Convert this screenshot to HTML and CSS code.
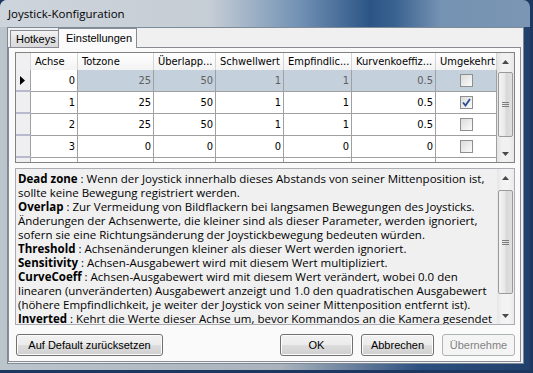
FILE: index.html
```html
<!DOCTYPE html>
<html lang="de">
<head>
  <meta charset="UTF-8">
  <title>Joystick-Konfiguration</title>
  <link rel="stylesheet" href="styles.css">
</head>
<body>
  <div class="window">
    <div class="titlebar">Joystick-Konfiguration</div>
    <div class="client">
      <div class="tabs">
        <div class="tab">Hotkeys</div>
        <div class="tab active">Einstellungen</div>
      </div>
      <div class="page">
        <div class="grid">
          <div class="cells">
            <div class="hd corner"></div>
            <div class="hd">Achse</div>
            <div class="hd">Totzone</div>
            <div class="hd">Überlapp...</div>
            <div class="hd">Schwellwert</div>
            <div class="hd">Empfindlic...</div>
            <div class="hd">Kurvenkoeffiz...</div>
            <div class="hd">Umgekehrt</div>

            <div class="rh"><svg width="5" height="9" viewBox="0 0 5 9"><polygon points="0,0 5,4.5 0,9" fill="#000"/></svg></div>
            <div class="c">0</div>
            <div class="c sel">25</div>
            <div class="c sel">50</div>
            <div class="c sel">1</div>
            <div class="c sel">1</div>
            <div class="c sel">0.5</div>
            <div class="c sel chk"><span class="box"></span></div>

            <div class="rh"></div>
            <div class="c">1</div>
            <div class="c">25</div>
            <div class="c">50</div>
            <div class="c">1</div>
            <div class="c">1</div>
            <div class="c">0.5</div>
            <div class="c chk"><span class="box checked"><svg width="9" height="9" viewBox="0 0 9 9"><path d="M1 4.5 L3.5 7.5 L8 1" fill="none" stroke="#2b4c95" stroke-width="1.8"/></svg></span></div>

            <div class="rh"></div>
            <div class="c">2</div>
            <div class="c">25</div>
            <div class="c">50</div>
            <div class="c">1</div>
            <div class="c">1</div>
            <div class="c">0.5</div>
            <div class="c chk"><span class="box"></span></div>

            <div class="rh"></div>
            <div class="c">3</div>
            <div class="c">0</div>
            <div class="c">0</div>
            <div class="c">0</div>
            <div class="c">0</div>
            <div class="c">0</div>
            <div class="c chk"><span class="box"></span></div>

            <div class="rh"></div>
            <div class="c"></div>
            <div class="c"></div>
            <div class="c"></div>
            <div class="c"></div>
            <div class="c"></div>
            <div class="c"></div>
            <div class="c chk"><span class="box"></span></div>
          </div>
          <div class="vscroll">
            <div class="sb-btn"><svg width="7" height="4" viewBox="0 0 7 4"><polygon points="0,4 3.5,0 7,4" fill="#4a4a4a"/></svg></div>
            <div class="sb-track"><div class="sb-thumb"><span class="grip"></span></div></div>
            <div class="sb-btn"><svg width="7" height="4" viewBox="0 0 7 4"><polygon points="0,0 3.5,4 7,0" fill="#4a4a4a"/></svg></div>
          </div>
        </div>

        <div class="info">
          <div class="info-text">
            <b>Dead zone</b> : Wenn der Joystick innerhalb dieses Abstands von seiner Mittenposition ist,<br>
            sollte keine Bewegung registriert werden.<br>
            <b>Overlap</b> : Zur Vermeidung von Bildflackern bei langsamen Bewegungen des Joysticks.<br>
            Änderungen der Achsenwerte, die kleiner sind als dieser Parameter, werden ignoriert,<br>
            sofern sie eine Richtungsänderung der Joystickbewegung bedeuten würden.<br>
            <b>Threshold</b> : Achsenänderungen kleiner als dieser Wert werden ignoriert.<br>
            <b>Sensitivity</b> : Achsen-Ausgabewert wird mit diesem Wert multipliziert.<br>
            <b>CurveCoeff</b> : Achsen-Ausgabewert wird mit diesem Wert verändert, wobei 0.0 den<br>
            linearen (unveränderten) Ausgabewert anzeigt und 1.0 den quadratischen Ausgabewert<br>
            (höhere Empfindlichkeit, je weiter der Joystick von seiner Mittenposition entfernt ist).<br>
            <b>Inverted</b> : Kehrt die Werte dieser Achse um, bevor Kommandos an die Kamera gesendet
          </div>
          <div class="vscroll">
            <div class="sb-btn"><svg width="7" height="4" viewBox="0 0 7 4"><polygon points="0,4 3.5,0 7,4" fill="#4a4a4a"/></svg></div>
            <div class="sb-track"><div class="sb-thumb"><span class="grip"></span></div></div>
            <div class="sb-btn"><svg width="7" height="4" viewBox="0 0 7 4"><polygon points="0,0 3.5,4 7,0" fill="#4a4a4a"/></svg></div>
          </div>
        </div>

        <div class="buttons">
          <button class="btn wide">Auf Default zurücksetzen</button>
          <span class="spacer"></span>
          <button class="btn">OK</button>
          <button class="btn">Abbrechen</button>
          <button class="btn" disabled>Übernehme</button>
        </div>
      </div>
    </div>
  </div>
</body>
</html>
```

FILE: styles.css
```css
body {
  margin: 0;
  background-color: #1c3760;
  font-family: "Liberation Sans", Arial, sans-serif;
}

.window {
  width: 530px;
  height: 370px;
  box-sizing: border-box;
  padding: 0 6px 6px 7px;
  border-radius: 7px 7px 0 0;
  overflow: hidden;
  display: flex;
  flex-direction: column;
  background: linear-gradient(to right, #bcc4cc 0, #aab3bd 280px, #2d5080 420px, #21406c 100%);
}

.titlebar {
  height: 27px;
  margin: 0 -6px 0 -7px;
  padding-left: 8px;
  flex: none;
  font-family: "Open Sans", sans-serif;
  font-size: 11.5px;
  line-height: 27px;
  color: #000;
  background: linear-gradient(to right, #ced4db 0, #c5cdd5 210px, #7191b4 300px, #2c5586 370px, #3a6290 395px, #7492b2 440px, #7b96b4 100%);
}

.client {
  flex: 1;
  display: flex;
  flex-direction: column;
  border: 1px solid #7d8b99;
  background-color: #f0f0f0;
  padding: 0 2px 1px 0;
}

.tabs {
  height: 19px;
  flex: none;
  display: flex;
  align-items: flex-end;
  padding-left: 2px;
  font-size: 11px;
}

.tab {
  height: 17px;
  width: 49px;
  box-sizing: border-box;
  border: 1px solid #898c95;
  border-bottom: none;
  padding-left: 5px;
  line-height: 16px;
  background: linear-gradient(#f3f3f3, #e3e3e3 50%, #d9d9d9);
}

.tab.active {
  height: 20px;
  width: 79px;
  margin-left: -1px;
  margin-bottom: -1px;
  padding-left: 7px;
  line-height: 19px;
  background: #fafafa;
  position: relative;
}

.page {
  flex: 1;
  display: flex;
  flex-direction: column;
  border: 1px solid #898c95;
  background-color: #fafafa;
  padding: 4px 5px 5px 6px;
}

/* grid */

.grid {
  height: 111px;
  flex: none;
  box-sizing: border-box;
  border: 1px solid #828282;
  display: flex;
  overflow: hidden;
  background-color: #fff;
}

.cells {
  width: 481px;
  display: grid;
  grid-template-columns: 15px 47px 76px 62px 68px 68px 84px 61px;
  grid-template-rows: 17px repeat(5, 22px);
  font-family: "DejaVu Sans Condensed", "DejaVu Sans", sans-serif;
  font-size: 11px;
}

.hd {
  box-sizing: border-box;
  border-right: 1px solid #d5d5d5;
  padding-left: 4px;
  line-height: 17px;
  white-space: nowrap;
  overflow: hidden;
  background: linear-gradient(#ffffff, #f3f3f3);
}

.hd.corner {
  padding: 0;
  background: #f0f0f2;
}

.rh {
  box-sizing: border-box;
  border-right: 1px solid #a0a0a0;
  border-bottom: 2px solid #b8b8cf;
  background: #efeff2;
  display: flex;
  align-items: center;
  padding-left: 4px;
}

.c {
  box-sizing: border-box;
  border-right: 1px solid #a0a0a0;
  border-bottom: 1px solid #a0a0a0;
  text-align: right;
  padding-right: 2px;
  line-height: 21px;
  color: #000;
}

.c.sel {
  background-color: #c4d0dc;
  color: #5e5e5e;
}

.c.chk {
  display: flex;
  justify-content: center;
  align-items: center;
  padding: 0;
}

.box {
  width: 13px;
  height: 13px;
  box-sizing: border-box;
  border: 1px solid #8e8f8f;
  background: linear-gradient(135deg, #dcdcdc, #fbfbfb);
  display: flex;
  align-items: center;
  justify-content: center;
}

/* scrollbars */

.vscroll {
  width: 17px;
  flex: none;
  display: flex;
  flex-direction: column;
  background: linear-gradient(to right, #e3e3e3, #f1f1f1 30%, #f1f1f1 70%, #e8e8e8);
}

.sb-btn {
  height: 17px;
  flex: none;
  display: flex;
  align-items: center;
  justify-content: center;
}

.sb-track {
  flex: 1;
}

.sb-thumb {
  margin: 2px 0 0 1px;
  width: 15px;
  height: 65px;
  box-sizing: border-box;
  border: 1px solid #9a9a9a;
  border-radius: 2px;
  background: linear-gradient(to right, #f4f4f4, #e8e8e8 45%, #d8d8d8 55%, #e0e0e0);
  display: flex;
  align-items: center;
  justify-content: center;
}

.grip {
  width: 7px;
  height: 5px;
  background: repeating-linear-gradient(#7d7d7d 0, #7d7d7d 1px, transparent 1px, transparent 2px);
}

/* info box */

.info {
  height: 157px;
  flex: none;
  margin-top: 5px;
  box-sizing: border-box;
  border: 1px solid #abadb3;
  background-color: #f0f0f0;
  display: flex;
  overflow: hidden;
}

.info-text {
  flex: 1;
  padding: 3px 0 0 2px;
  font-family: "Open Sans", sans-serif;
  font-size: 11.5px;
  line-height: 14px;
  white-space: nowrap;
  overflow: hidden;
  color: #000;
}

.info .vscroll {
  background: linear-gradient(to right, #e6e6e6, #f3f3f3 30%, #f3f3f3 70%, #ebebeb);
}

.info .sb-thumb {
  margin-top: 4px;
  height: 104px;
}

/* buttons */

.buttons {
  margin-top: 9px;
  display: flex;
  gap: 8px;
}

.spacer {
  flex: 1;
}

.btn {
  width: 73px;
  height: 22px;
  font-family: "Liberation Sans", Arial, sans-serif;
  font-size: 11px;
  color: #000;
  border: 1px solid #707070;
  border-radius: 3px;
  box-shadow: inset 0 0 0 1px #fcfcfc;
  background: linear-gradient(#f2f2f2 0, #ebebeb 50%, #dddddd 50%, #cfcfcf 100%);
  padding: 0;
}

.btn.wide {
  width: 147px;
  margin-left: 1px;
}

.btn:disabled {
  color: #838383;
  border-color: #adb2b5;
  background: #f4f4f4;
  box-shadow: none;
}
```
